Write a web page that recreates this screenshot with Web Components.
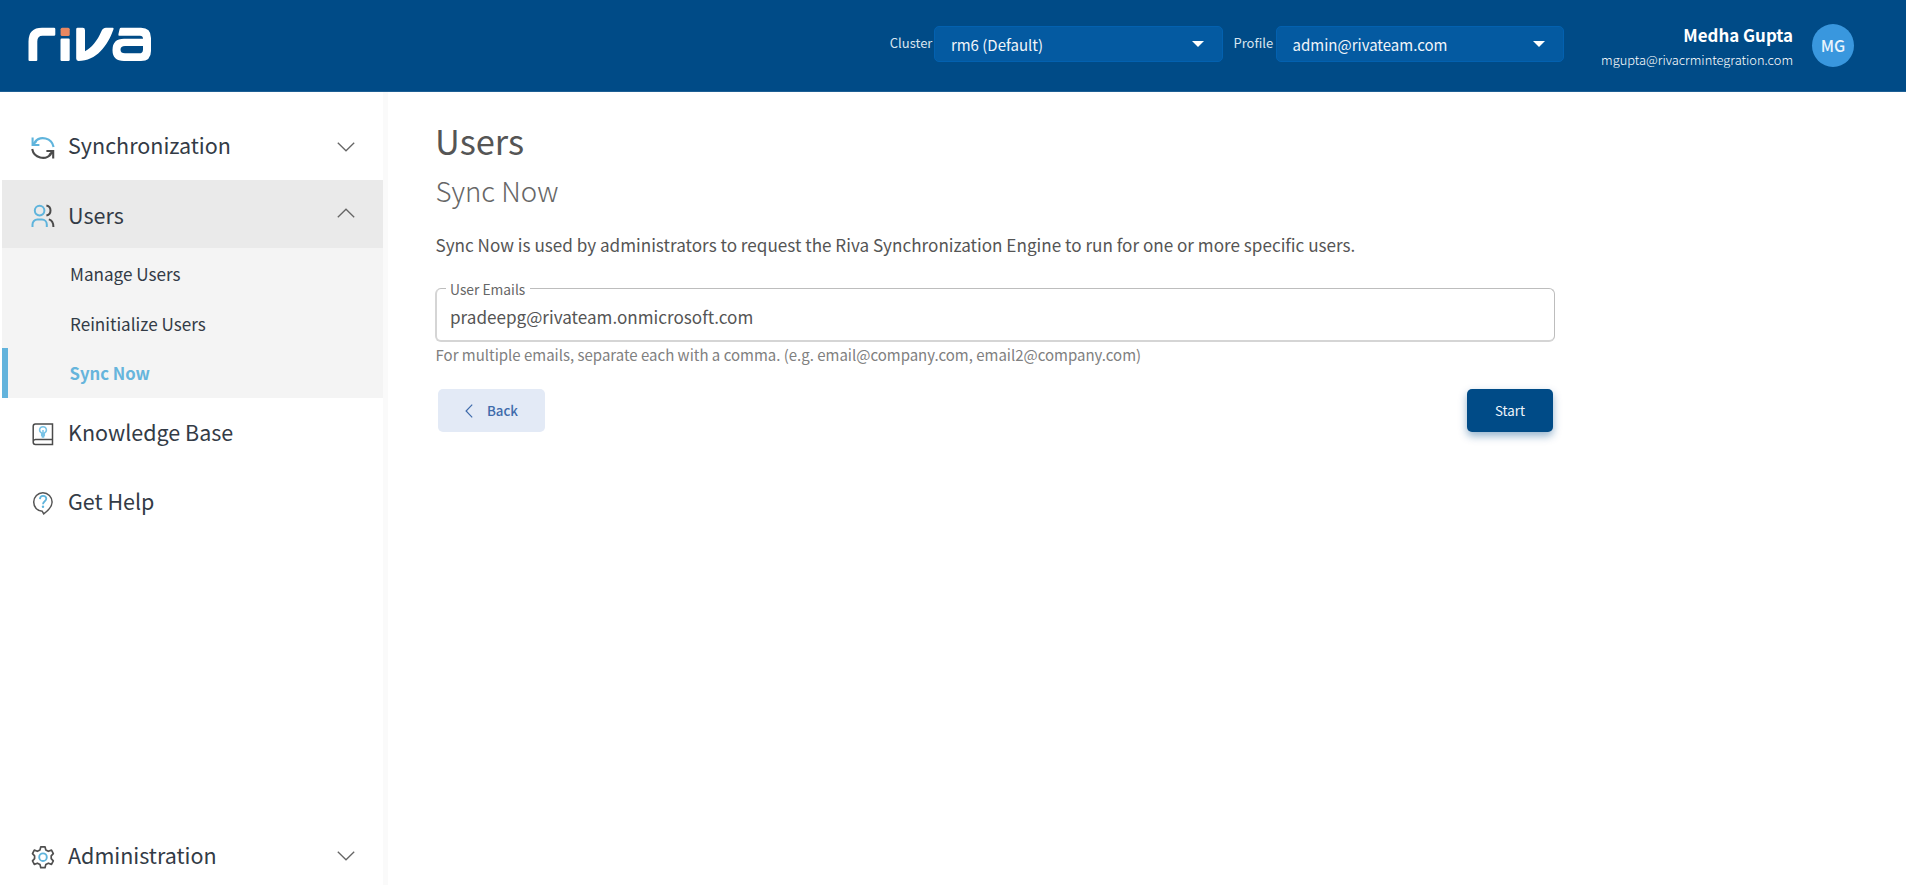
<!DOCTYPE html>
<html lang="en">
<head>
<meta charset="utf-8">
<title>Riva - Sync Now</title>
<style>
html,body{margin:0;height:100%;overflow:hidden;background:#fff}
body{font-family:"Noto Sans CJK SC","Noto Sans",sans-serif;color:#555}
</style>
</head>
<body>
<riva-app></riva-app>
<script>
const define=(name,html)=>customElements.define(name,class extends HTMLElement{
  constructor(){super();const t=document.createElement('template');t.innerHTML=typeof html==='function'?html(this):html;
    this.attachShadow({mode:'open'}).append(t.content.cloneNode(true));}
});
const icons={
 sync:'<g fill="none" stroke-width="2.1"><path stroke="#5fb4dc" d="M22.6 11A10.8 10.8 0 0 0 3.6 6.2M1.6 1.6V9H8.4M2.4 8.2 5.6 5"/><path stroke="#4b4b4b" d="M1.2 13A10.8 10.8 0 0 0 20.2 17.8M22.2 22.4V15H15.4M21.4 15.8 18.2 19"/></g>',
 users:'<g fill="none" stroke-width="2"><g stroke="#5fb4dc"><circle cx="8.6" cy="6.6" r="4.8"/><path d="M1.5 23V20.4A4.8 4.8 0 0 1 6.3 15.6H11A4.8 4.8 0 0 1 15.8 20.4V23"/></g><path stroke="#4b4b4b" d="M15.4 1.6A5.1 5.1 0 0 1 15.4 11.6M17.8 15.4C20.8 16.2 22.4 18.6 22.4 23"/></g>',
 book:'<g fill="none" stroke-width="1.5"><path stroke="#4b4b4b" d="M21.5 17.4V2.1H4.4A2.2 2.2 0 0 0 2.2 4.3V20.3A2.2 2.2 0 0 0 4.4 22.5H21.5V17.4H4.4A2.2 2.2 0 0 0 2.3 19.4"/><path stroke="#79c3e6" d="M10.7 13.4V11.2C7.2 9 8.4 4.7 12 4.7S16.8 9 13.3 11.2V13.4ZM10.7 15H13.3M12 8V13"/></g>',
 help:'<path fill="none" stroke="#555" stroke-width="1.5" d="M12.7 22.8 11.2 20.2C6.3 20 2.7 16 2.7 11.1A9.2 9.4 0 0 1 21.1 11.1C21.1 15 18.6 18.6 12.7 22.8Z"/><path fill="none" stroke="#5fb4dc" stroke-width="1.8" d="M8.9 8.2C9.1 5.9 10.2 4.9 12 4.9 14 4.9 15.3 6 15.3 7.8 15.3 10.3 12 10.3 12 13.2"/><circle cx="12" cy="15.8" r="1.2" fill="#5fb4dc"/>',
 gear:'<path fill="none" stroke="#505050" stroke-width="1.7" stroke-linejoin="round" d="M9.8 1.8H14L14.8 4.9 17.4 6.3 20.5 5.1 22.3 8.6 20.2 10.9V13.6L22.3 15.9 20.5 19.4 17.4 18.2 14.8 19.6 14 22.7H9.8L9 19.6 6.4 18.2 3.3 19.4 1.5 15.9 3.6 13.6V10.9L1.5 8.6 3.3 5.1 6.4 6.3 9 4.9Z"/><circle cx="12" cy="12.2" r="3.8" fill="none" stroke="#5fb4dc" stroke-width="1.9"/>'
};
define('riva-logo',`<style>:host{display:block;width:124px;height:36px}svg{display:block}</style>
<svg width="124" height="36" viewBox="0 0 124 36" aria-label="Riva"><g fill="#fff">
<path d="M.5 33V14.5Q.5.8 14 .8H26Q27.3.8 27.3 2V7.6Q27.3 8.8 26 8.8H14.5Q9.3 8.8 9.3 14.5V33Q9.3 34 8.2 34H1.6Q.5 34 .5 33Z"/>
<rect x="32.5" y="11.5" width="9.2" height="22.5" rx="1.2"/>
<path d="M49.6.8H54.8Q57 .8 57 3.2V24.3C63.5 21 69.5 13.4 73.3 4.5Q74.8.8 78 .8H84.6Q86 .8 85.5 2.2C79.5 19 68.5 33.7 50.4 34Q48.2 34 48.2 31.6V2.2Q48.2.8 49.6.8Z"/>
<path fill-rule="evenodd" d="M93 .8H113Q123 .8 123 11V24Q123 34 113 34H96Q84.5 34 84.5 23Q84.5 11.8 96 11.8H115Q115 8.8 112 8.8H91.4Q90 8.8 90.4 7.2L91.6 2Q92 .8 93 .8ZM97 19Q92.5 19 92.5 22.7Q92.5 26.3 97 26.3H111Q115 26.3 115 22.4V19Z"/></g>
<rect x="32.6" y=".8" width="9.1" height="8.2" rx="1.5" fill="#e88761"/></svg>`);
define('header-select',`<style>:host{display:flex;align-items:center;box-sizing:border-box;width:var(--w,289px);height:36px;border:1px solid #0361b0;border-radius:5px;background:#045aa1;color:#f1f5fa;font-size:15px;line-height:36px;padding:1px 18px 0 15.5px;justify-content:space-between}i{width:0;height:0;border:6px solid transparent;border-top-color:#fff;border-bottom:0;margin-bottom:2px}</style><slot></slot><i></i>`);
define('user-badge',`<style>:host{display:flex;align-items:flex-start}.t{display:flex;flex-direction:column;align-items:flex-end;color:#fff}.n{font-size:16.9px;font-weight:700;line-height:25px}.e{font-size:12.85px;font-weight:300;line-height:26px}.a{width:42px;height:43px;border-radius:50%;background:#3997de;color:#eaf4fc;font-size:16px;font-weight:500;line-height:43px;text-align:center;margin:2px 0 0 19px}</style><div class="t"><span class="n"><slot></slot></span><span class="e"><slot name="email"></slot></span></div><div class="a"><slot name="initials"></slot></div>`);
define('app-header',`<style>:host{display:flex;box-sizing:border-box;height:92px;background:#004b87;border-bottom:1px solid #1d5f94;padding:26px 52px 0 28px;align-items:flex-start}riva-logo{margin-top:1px}.r{display:flex;margin-left:auto}label{color:#d9e5f0;font-size:13px;line-height:34px}.c{margin-right:2px}.p{margin:0 3px 0 10px}user-badge{margin:-4px 0 -6px 37px}</style>
<riva-logo></riva-logo><div class="r"><label class="c">Cluster</label><header-select>rm6 (Default)</header-select><label class="p">Profile</label><header-select style="--w:288px">admin@rivateam.com</header-select><user-badge>Medha Gupta<span slot="email">mgupta@rivacrmintegration.com</span><span slot="initials">MG</span></user-badge></div>`);
define('nav-item',h=>`<style>:host{display:flex;box-sizing:border-box;align-items:center;height:69px;padding:0 28px 0 28.5px;color:#333b46;font-size:21.5px;line-height:32px;flex:none}:host([open]){background:#eaeaea;height:68px}.t{margin-bottom:2px}:host([open]) .t{margin-bottom:-1px}:host([open]) .i{margin-top:4px}.i{margin:3px 13.5px 0 0}.c{margin:1px 0 0 auto}:host([open]) .c{transform:rotate(180deg);margin-bottom:3px}svg{flex:none}</style>
<svg class="i" width="24" height="24" viewBox="0 0 24 24">${icons[h.getAttribute('icon')]}</svg><span class="t"><slot></slot></span>${h.hasAttribute('toggle')?'<svg class="c" width="18" height="10" viewBox="0 0 18 10"><path d="M.8.8 9 8.8 17.2.8" fill="none" stroke="#666" stroke-width="1.3"/></svg>':''}`);
define('nav-sub',`<style>:host{display:flex;box-sizing:border-box;align-items:center;height:50px;padding:2px 0 0 68px;background:#f4f4f4;color:#333b46;font-size:17.1px;line-height:24px;flex:none}:host([active]){color:#66b5dc;font-weight:600;font-size:16.7px;padding:0 0 0 67.5px;background:linear-gradient(90deg,#62b3dc 6px,#f4f4f4 6px)}</style><slot></slot>`);
define('side-nav',`<style>:host{display:flex;flex-direction:column;box-sizing:border-box;width:383px;height:798px;padding:20px 0 0 2px;background:#fff;flex:none}.s{flex:1}</style>
<nav-item icon="sync" toggle style="height:68px">Synchronization</nav-item><nav-item icon="users" toggle open>Users</nav-item><nav-sub>Manage Users</nav-sub><nav-sub>Reinitialize Users</nav-sub><nav-sub active>Sync Now</nav-sub><nav-item icon="book">Knowledge Base</nav-item><nav-item icon="help">Get Help</nav-item><div class="s"></div><nav-item icon="gear" toggle>Administration</nav-item>`);
define('text-field',`<style>:host{display:block}fieldset{margin:0;padding:0 0 0 9px;box-sizing:border-box;height:63px;border:1px solid #bdbdbd;border-bottom:2px solid #d5d5d5;border-left:2px solid #d5d5d5;border-radius:6px;min-width:0}legend{padding:2px 5px 0 4px;font-size:13.8px;line-height:17px;height:17px;color:#666}.v{font-size:17.1px;line-height:24px;padding:7px 0 0 4px;color:#555}.h{font-size:14.99px;line-height:24px;color:#808080;margin:1px 0 0 .5px}</style>
<fieldset><legend><slot name="label"></slot></legend><div class="v"><slot></slot></div></fieldset><div class="h"><slot name="hint"></slot></div>`);
define('app-button',`<style>:host{display:flex;align-items:center;justify-content:center;box-sizing:border-box;height:43px;border-radius:5px;font-size:13.3px;line-height:20px;font-weight:500;padding-top:1px}:host([kind=primary]){width:86px;background:#004b87;color:#f0f6fb;font-weight:400;box-shadow:0 4px 9px rgba(0,75,135,.42)}:host([kind=secondary]){width:107px;background:#e3eaf6;color:#3f6bab}</style><slot></slot>`);
define('sync-page',`<style>:host{display:block;width:1120px;padding:24px 0 0 52px}h1,h2,p{margin:0}h1{font-size:34.4px;line-height:48px;font-weight:400;color:#555}h2{font-size:27.6px;line-height:46px;font-weight:300;color:#666;margin:3px 0 0 .5px}p{font-size:17.13px;line-height:28px;margin:18px 0 20px .5px}.b{display:flex;justify-content:space-between;padding:0 2px 0 3px;margin-top:22px}app-button svg{margin-right:14px}</style>
<h1>Users</h1><h2>Sync Now</h2><p>Sync Now is used by administrators to request the Riva Synchronization Engine to run for one or more specific users.</p>
<text-field><span slot="label">User Emails</span>pradeepg@rivateam.onmicrosoft.com<span slot="hint">For multiple emails, separate each with a comma. (e.g. email@company.com, email2@company.com)</span></text-field>
<div class="b"><app-button kind="secondary"><svg width="8" height="14" viewBox="0 0 8 14"><path d="M7.2.7 1.1 7l6.1 6.3" fill="none" stroke="#3f6bab" stroke-width="1.2"/></svg>Back</app-button><app-button kind="primary">Start</app-button></div>`);
define('riva-app',`<style>:host{display:block;height:100vh;overflow:hidden}.m{display:flex;align-items:flex-start}.e{width:5px;height:793px;background:#fafafa;flex:none}sync-page{margin-left:-5px}</style><app-header></app-header><div class="m"><side-nav></side-nav><div class="e"></div><sync-page></sync-page></div>`);
</script>
</body>
</html>
